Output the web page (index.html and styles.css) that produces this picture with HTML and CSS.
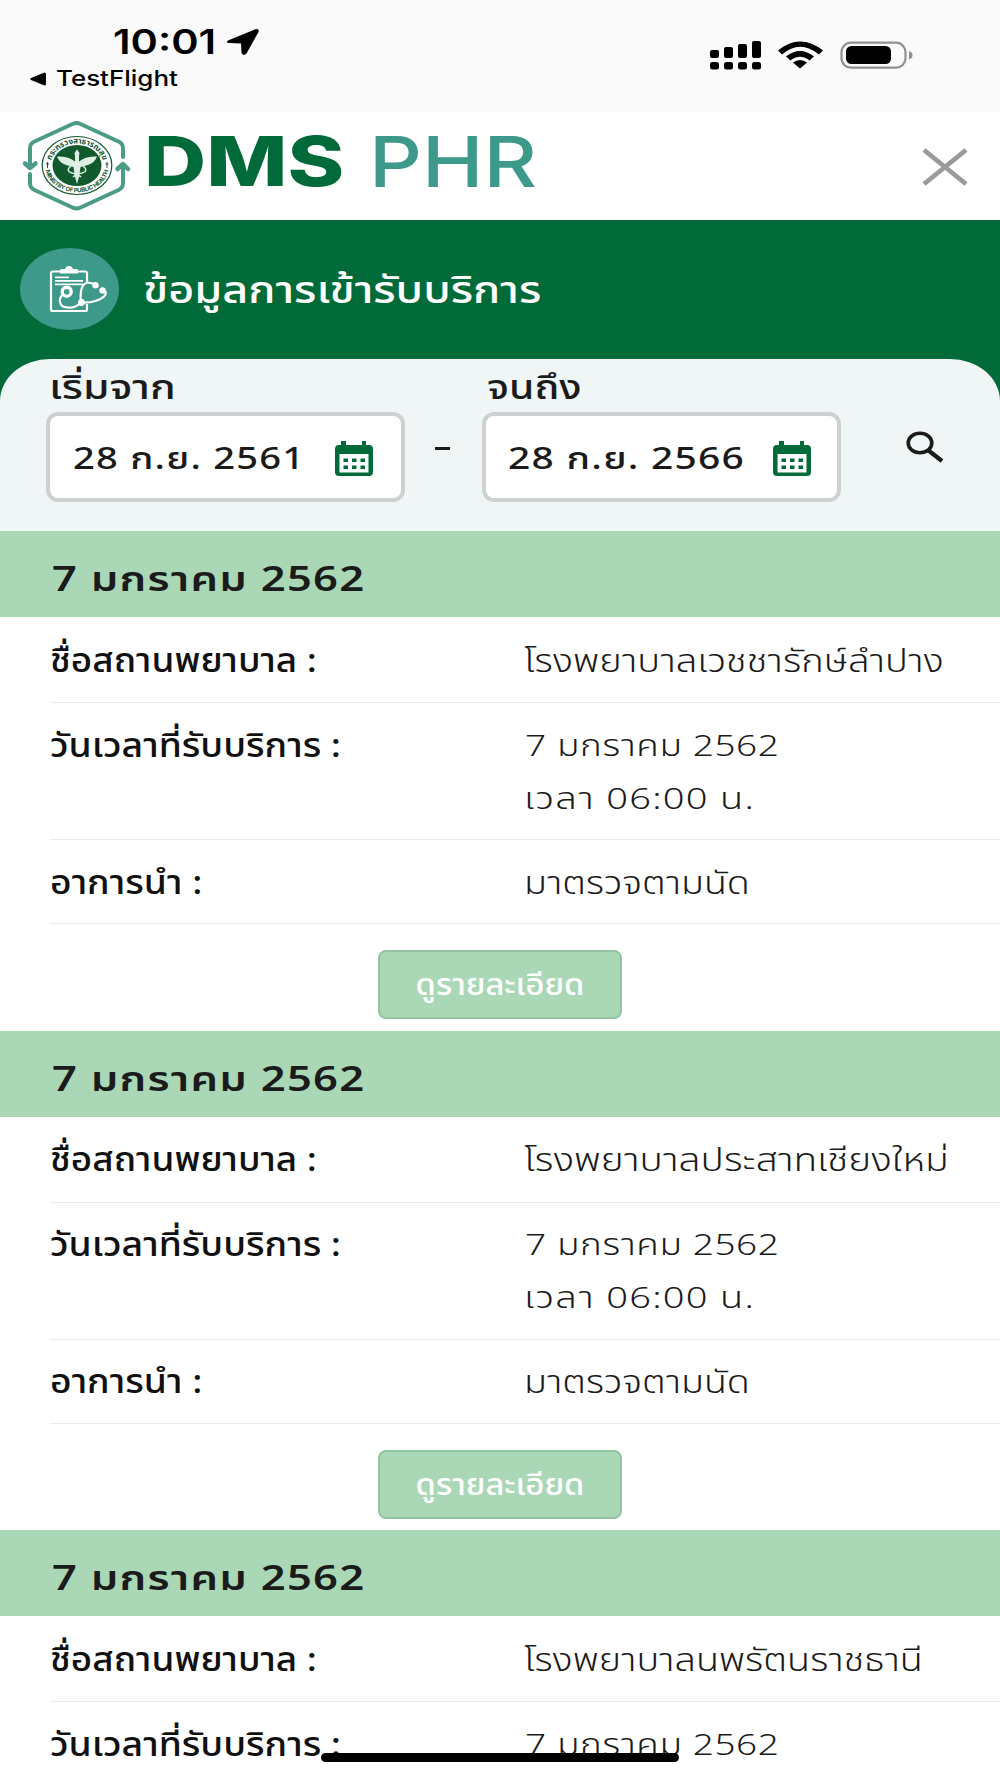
FILE: index.html
```html
<!DOCTYPE html>
<html lang="th">
<head>
<meta charset="utf-8">
<title>DMS PHR</title>
<link rel="stylesheet" href="styles.css">
</head>
<body>
<div class="status">
  <div class="status-left">
    <div class="clock"><span class="time-text">10:01</span>
      <svg class="arrow" width="34" height="28" viewBox="0 0 34 28"><path d="M2 12.500 30 1Q33.500 .500 32.500 4L20.500 25.500Q17.500 28.500 15.500 25L15 15.500 3 15Q-.500 14.500 2 12.500Z"/></svg>
    </div>
    <div class="back">
      <svg width="17" height="14" viewBox="0 0 17 14"><path d="M1 6 14.500.5Q16 .5 16 2V12Q16 13.500 14.500 13.500L1 8Q-.5 7 1 6Z"/></svg>
      <span class="back-text">TestFlight</span>
    </div>
  </div>
  <svg class="signals" width="210" height="32" viewBox="706 38 210 32">
    <g>
      <rect x="710" y="50" width="9" height="8" rx="2"/><rect x="724" y="47" width="9" height="11" rx="2"/><rect x="738" y="44" width="9" height="14" rx="2"/><rect x="752" y="41" width="9" height="17" rx="2"/>
      <rect x="710" y="62" width="9" height="7.500" rx="2.500"/><rect x="724" y="62" width="9" height="7.500" rx="2.500"/><rect x="738" y="62" width="9" height="7.500" rx="2.500"/><rect x="752" y="62" width="9" height="7.500" rx="2.500"/>
    </g>
    <path d="M778 50.500Q800 32.500 823 50.500L819 54.500Q800 39 782 54.500Z"/>
    <path d="M786 56.500Q800 45.500 814 56.500L809.500 60.500Q800 53 790.500 60.500Z"/>
    <path d="M793 62.500Q800 57.500 807 62.500L800 68.500Z"/>
    <rect x="841.500" y="42.700" width="64" height="25" rx="9.500" fill="none" stroke="#919191" stroke-width="2.200"/>
    <rect x="846" y="46" width="45" height="18" rx="5.500"/>
    <path d="M909 51Q912.500 52 912.500 55.200T909 59.500Z" fill="#919191"/>
  </svg>
</div>

<header class="brand">
  <svg class="emblem" width="116" height="100" viewBox="20 116 116 100">
    <g fill="none" stroke="#4b9c86" stroke-width="4" stroke-linecap="round" stroke-linejoin="round">
      <path d="M30 164V148Q30 143.500 34.500 141.500L72.500 124Q76.500 122 80.500 124L118.500 141.500Q123 143.500 123 148V157"/>
      <path d="M30 174V183Q30 188 34.500 190L72.500 207.500Q76.500 209.500 80.500 207.500L118.500 190Q123 188 123 183V166"/>
      <path d="M25 163.500 30 168 35.500 163.500M117.500 169 123 164 128 169" stroke-width="4.500"/>
    </g>
    <ellipse cx="77" cy="165.500" rx="34.800" ry="29" fill="#fff" stroke="#16592f" stroke-width="1.200"/>
    <ellipse cx="77" cy="165.500" rx="24.500" ry="20.500" fill="#12592d"/>
    <path id="ring-top" d="M50.500 165.500A26.500 22 0 0 1 103.500 165.500" fill="none"/>
    <path id="ring-bottom" d="M45 165.500A32 26.800 0 0 0 109 165.500" fill="none"/>
    <text class="ring-th"><textPath href="#ring-top" startOffset="50%" text-anchor="middle" textLength="66">กระทรวงสาธารณสุข</textPath></text>
    <text class="ring-en"><textPath href="#ring-bottom" startOffset="50%" text-anchor="middle" textLength="82">MINISTRY OF PUBLIC HEALTH</textPath></text>
    <path d="M47.500 162V168M46 164H49M107 162V168M105.500 164H108.500" stroke="#16592f" fill="none"/>
    <g fill="#dfeee2">
      <path d="M57 156.500Q66 156 71 159L75 161.500V156L74.500 153 77 149.500 79.500 153 79 156V161.500L83 159Q88 156 97 156.500Q95 162.500 88 165L80.500 167 79 177 77 184 75 177 73.500 167 66 165Q59 162.500 57 156.500Z"/>
    </g>
    <path d="M71 166Q65 171 72 173 78 174 81 177M83 166Q89 171 82 173 76 174 73 177" fill="none" stroke="#dfeee2" stroke-width="1.500"/>
  </svg>
  <span class="dms">DMS</span><span class="phr">PHR</span>
  <svg class="close" width="46" height="38" viewBox="0 0 46 38"><path d="M2 2 44 36M44 2 2 36" stroke="#9a9a9a" stroke-width="4.800" fill="none"/></svg>
</header>

<section class="hero">
  <svg class="hero-icon" width="100" height="82" viewBox="20 248 100 82">
    <ellipse cx="69.500" cy="289" rx="49.500" ry="41" fill="#3d998a"/>
    <g fill="none" stroke="#fff" stroke-width="2.200">
      <path d="M87 282V273Q87 271.500 85 271.500H53Q51 271.500 51 273V309.500Q51 311 53 311H85Q87 311 87 309.500V304"/>
      <path d="M55 277.300H69M55 280.800H83M55 284.300H83" stroke-width="1.800"/>
      <circle cx="66.700" cy="291.700" r="4.500" stroke-width="3.400"/>
      <path d="M62 295Q57 302 63 306.500 74 310 81 302.500Q79 284 88 282.500L95 284M81 302.500Q97 303 104 296.500 108 293 103 289.500"/>
    </g>
    <g fill="#fff"><path d="M60 273.500V270Q60 269 62 269H65Q66 266 69 266T73 269H76Q78 269 78 270V273.500Z"/><circle cx="95.500" cy="285.300" r="3.200"/><circle cx="102.500" cy="290.500" r="3.200"/><circle cx="81.500" cy="302.500" r="3.400"/></g>
  </svg>
  <h1 class="hero-title">ข้อมูลการเข้ารับบริการ</h1>
</section>

<section class="filter">
  <div class="field">
    <span class="field-name from">เริ่มจาก</span>
    <div class="date-box">
      <span class="date-text">28 ก.ย. 2561</span>
      <svg class="calendar" width="38" height="35" viewBox="0 0 38 35"><path fill="#006a38" fill-rule="evenodd" d="M6 0H11V4H27V0H31V4H34Q38 4 38 8V31Q38 35 34 35H4Q0 35 0 31V8Q0 4 4 4H6ZM4.500 13V31.500H33.500V13Z"/><path fill="#006a38" d="M8.500 17.500h4.500v3.500h-4.500zM17 17.500h4.500v3.500h-4.500zM25.500 17.500H30v3.500h-4.500zM8.500 24.500h4.500v3.500h-4.500zM17 24.500h4.500v3.500h-4.500zM25.500 24.500H30v3.500h-4.500z"/></svg>
    </div>
  </div>
  <span class="dash"></span>
  <div class="field">
    <span class="field-name to">จนถึง</span>
    <div class="date-box second">
      <span class="date-text">28 ก.ย. 2566</span>
      <svg class="calendar" width="38" height="35" viewBox="0 0 38 35"><path fill="#006a38" fill-rule="evenodd" d="M6 0H11V4H27V0H31V4H34Q38 4 38 8V31Q38 35 34 35H4Q0 35 0 31V8Q0 4 4 4H6ZM4.500 13V31.500H33.500V13Z"/><path fill="#006a38" d="M8.500 17.500h4.500v3.500h-4.500zM17 17.500h4.500v3.500h-4.500zM25.500 17.500H30v3.500h-4.500zM8.500 24.500h4.500v3.500h-4.500zM17 24.500h4.500v3.500h-4.500zM25.500 24.500H30v3.500h-4.500z"/></svg>
    </div>
  </div>
  <svg class="search" width="38" height="32" viewBox="0 0 38 32" fill="none" stroke="#1b1b1b"><ellipse cx="14" cy="12" rx="11.800" ry="9.800" stroke-width="3.600"/><path d="M22.500 19.500 36 30" stroke-width="4.200"/></svg>
</section>

<main class="visits">
  <article class="visit">
    <h2 class="day"><span class="day-text">7 มกราคม 2562</span></h2>
    <div class="row first"><span class="name">ชื่อสถานพยาบาล :</span><span class="value place">โรงพยาบาลเวชชารักษ์ลำปาง</span></div>
    <div class="row"><span class="name">วันเวลาที่รับบริการ :</span><div class="stack"><span class="value date">7 มกราคม 2562</span><span class="value hour">เวลา 06:00 น.</span></div></div>
    <div class="row"><span class="name">อาการนำ :</span><span class="value symptom">มาตรวจตามนัด</span></div>
    <div class="action"><button class="detail"><span class="detail-text">ดูรายละเอียด</span></button></div>
  </article>
  <article class="visit">
    <h2 class="day"><span class="day-text">7 มกราคม 2562</span></h2>
    <div class="row first"><span class="name">ชื่อสถานพยาบาล :</span><span class="value place">โรงพยาบาลประสาทเชียงใหม่</span></div>
    <div class="row"><span class="name">วันเวลาที่รับบริการ :</span><div class="stack"><span class="value date">7 มกราคม 2562</span><span class="value hour">เวลา 06:00 น.</span></div></div>
    <div class="row"><span class="name">อาการนำ :</span><span class="value symptom">มาตรวจตามนัด</span></div>
    <div class="action"><button class="detail"><span class="detail-text">ดูรายละเอียด</span></button></div>
  </article>
  <article class="visit">
    <h2 class="day"><span class="day-text">7 มกราคม 2562</span></h2>
    <div class="row first"><span class="name">ชื่อสถานพยาบาล :</span><span class="value place">โรงพยาบาลนพรัตนราชธานี</span></div>
    <div class="row last"><span class="name">วันเวลาที่รับบริการ :</span><span class="value date">7 มกราคม 2562</span></div>
  </article>
</main>
<div class="home-bar"></div>
</body>
</html>
```
FILE: styles.css
```css
* { box-sizing: border-box; }
html, body { height: 1778px; overflow: hidden; }
body {
  position: relative;
  margin: 0;
  background: #fff;
  color: #1b1b1b;
  font-family: "Noto Sans Thai", "Noto Sans", sans-serif;
  white-space: nowrap;
}
svg { display: block; flex: none; }

/* Wide lettering */
.time-text, .back-text, .dms, .phr, .hero-title, .field-name, .date-text,
.day-text, .name, .value { display: block; transform-origin: 0 50%; }

/* Status bar */
.status { display: flex; justify-content: space-between; height: 112px; background: #fafafa; color: #000; padding: 0 84px 0 30px; }
.status-left { padding-top: 22px; font-family: Inter, sans-serif; }
.clock { display: flex; align-items: center; height: 40px; padding-left: 83px; }
.time-text { width: 113px; font-size: 34px; font-weight: 600; line-height: 40px; transform: scaleX(1.22); }
.arrow { margin-top: -1px; }
.back { display: flex; align-items: center; height: 34px; }
.back svg { margin-top: -1px; }
.back-text { margin-left: 9px; font-size: 21px; font-weight: 500; line-height: 34px; transform: scaleX(1.235); }
.signals { margin-top: 38px; }

/* Brand header */
.brand { display: flex; align-items: center; height: 108px; padding: 0 32px 0 20px; font-family: Inter, sans-serif; }
.ring-th { font: 700 8px "Noto Sans Thai", sans-serif; fill: #16592f; }
.ring-en { font: 700 6px Inter, sans-serif; fill: #16592f; }
.dms { width: 225px; margin: -10px 0 0 8px; font-size: 69px; font-weight: 800; line-height: 80px; color: #006a38; transform: scaleX(1.248); }
.phr { margin-top: -8px; font-size: 70px; font-weight: 550; line-height: 80px; color: #3d998a; transform: scaleX(1.18); }
.close { margin: 2px 0 0 auto; }

/* Title */
.hero { display: flex; align-items: center; height: 189px; padding: 0 20px 51px; background: #006a38; }
.hero-title { margin: 5px 0 0 23px; color: #fff; font-size: 38px; font-weight: 500; line-height: 60px; transform: scaleX(1.182); }

/* Date filter */
.filter { display: flex; height: 172px; margin-top: -50px; padding: 3px 46px; border-radius: 50px 50px 0 0 / 42px 42px 0 0; background: #f0f5f6; }
.field { width: 359px; }
.field-name { padding-top: 4px; margin-left: 3px; font-size: 34px; font-weight: 500; line-height: 46px; transform: scaleX(1.25); }
.to { margin-left: 5px; transform: scaleX(1.2); }
.date-box { display: flex; align-items: center; justify-content: space-between; height: 90px; padding: 0 28px 0 23px; border: 4px solid #cdd1d2; border-radius: 12px; background: #fff; }
.date-text { margin-top: 5px; font-size: 31px; font-weight: 550; line-height: 46px; letter-spacing: 1px; transform: scaleX(1.23); }
.calendar { margin-top: 3px; }
.second { padding: 0 26px 0 22px; }
.second .date-text { transform: scaleX(1.255); }
.dash { width: 15px; height: 3px; margin: 85px 32px 0 30px; background: #1b1b1b; }
.search { margin: 69px 0 0 65px; }

/* Visits */
.visit { height: 499.5px; background: #fff; }
.visit:last-child { height: auto; }
.day { height: 86px; margin: 0; padding: 23px 0 0 52px; background: #aad8b6; font-size: 34px; line-height: 54px; font-weight: 600; }
.day-text { width: 240px; letter-spacing: 1px; transform: scaleX(1.278); }
.row { display: flex; margin-left: 50px; padding: 17.5px 0 12.5px; border-bottom: 1px solid #ebebeb; line-height: 53px; }
.row.first { padding-top: 18.5px; padding-bottom: 13.5px; }
.row.last { padding-bottom: 0; border: 0; }
.name { width: 474px; color: #111; font-size: 33px; font-weight: 500; transform: scaleX(1.13); }
.row.first .name { transform: scaleX(1.118); }
.value { font-size: 32px; font-weight: 300; transform: scaleX(1.192); }
.visit:nth-child(2) .place { transform: scaleX(1.215); }
.visit:nth-child(3) .place { transform: scaleX(1.183); }
.value.date { font-size: 30px; letter-spacing: .5px; margin-left: 1px; transform: scaleX(1.23); }
.value.hour { font-size: 30px; letter-spacing: 1px; transform: scaleX(1.27); }
.value.symptom { transform: scaleX(1.175); }
.action { display: flex; justify-content: center; padding-top: 26px; }
.detail { width: 244px; height: 69px; padding: 2px 0 0; border: 2px solid #93c4a2; border-radius: 8px; background: #aad8b6; color: #fff; font: 500 30px/65px "Noto Sans Thai", sans-serif; }
.detail-text { display: block; transform: scaleX(1.09); }

.home-bar { position: absolute; left: 321px; top: 1753px; width: 358px; height: 9px; border-radius: 5px; background: #000; }
```
